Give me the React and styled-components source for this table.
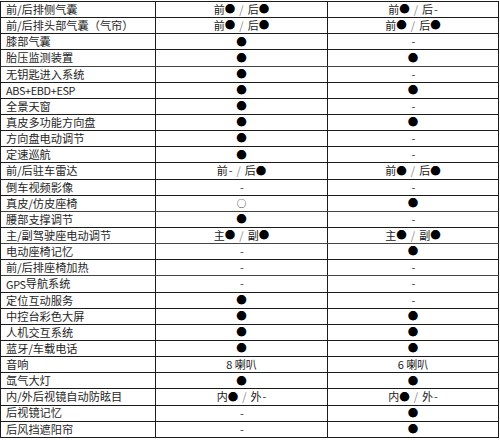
import React from "react";
import styled, { createGlobalStyle } from "styled-components";

const Global = createGlobalStyle`
  html, body { margin: 0; padding: 0; background: #ffffff; }
  body { font-family: "Noto Sans CJK SC", "Noto Sans", sans-serif; }
`;

const Page = styled.div`
  width: 500px;
  height: 440px;
  overflow: hidden;
  padding-top: 1px;
  box-sizing: border-box;
  background: #fff;
`;

const Table = styled.div`
  width: 499px;
  border-top: 1px solid #1c1c1c;
  border-left: 1px solid #1c1c1c;
  box-sizing: border-box;
`;

const Row = styled.div`
  display: grid;
  grid-template-columns: 155px 172px 171px;
  height: 16.15px;
  box-sizing: border-box;
  border-bottom: 1px solid ${(p) => (p.$soft ? "#444" : "#1c1c1c")};
`;

const Label = styled.div`
  display: flex;
  align-items: center;
  padding-left: 5px;
  border-right: 1px solid #1c1c1c;
  font-size: 11.2px;
  line-height: 1;
  color: #1e1e1e;
  white-space: nowrap;
  overflow: hidden;
`;

const Latin = styled.span`
  letter-spacing: -0.3px;
  font-size: 10.8px;
`;

const Cell = styled.div`
  display: flex;
  align-items: center;
  justify-content: center;
  border-right: 1px solid #1c1c1c;
  font-size: 11px;
  line-height: 1;
  color: #1a1a1a;
  white-space: pre;
`;

const Dot = styled.span`
  color: #000;
  font-size: 10.5px;
`;

const Ring = styled.span`
  color: #111;
  font-size: 9.5px;
`;

const Slash = styled.span`
  color: #8a8a8a;
  margin: 0 4px;
`;

const Dash = styled.span`
  color: #333;
  margin-left: 1px;
`;

const mark = (v) => (v === "●" ? <Dot>●</Dot> : <Dash>-</Dash>);

const renderValue = (v) => {
  if (v === "●") return <Dot>●</Dot>;
  if (v === "-") return <Dash>-</Dash>;
  if (v === "○") return <Ring>○</Ring>;
  if (Array.isArray(v)) {
    const [a, av, b, bv] = v;
    return (
      <>
        {a}
        {mark(av)}
        <Slash>/</Slash>
        {b}
        {mark(bv)}
      </>
    );
  }
  return v;
};

const rows = [
  ["前/后排侧气囊", ["前", "●", "后", "●"], ["前", "●", "后", "-"]],
  ["前/后排头部气囊（气帘）", ["前", "●", "后", "●"], ["前", "●", "后", "●"]],
  ["膝部气囊", "●", "-"],
  ["胎压监测装置", "●", "●"],
  ["无钥匙进入系统", "●", "-"],
  [<Latin key="a">ABS+EBD+ESP</Latin>, "●", "●"],
  ["全景天窗", "●", "-"],
  ["真皮多功能方向盘", "●", "●"],
  ["方向盘电动调节", "●", "-"],
  ["定速巡航", "●", "-"],
  ["前/后驻车雷达", ["前", "-", "后", "●"], ["前", "●", "后", "●"]],
  ["倒车视频影像", "-", "-"],
  ["真皮/仿皮座椅", "○", "●"],
  ["腰部支撑调节", "●", "-"],
  ["主/副驾驶座电动调节", ["主", "●", "副", "●"], ["主", "●", "副", "●"]],
  ["电动座椅记忆", "-", "●"],
  ["前/后排座椅加热", "-", "-"],
  [<><Latin key="g">GPS</Latin> 导航系统</>, "-", "-"],
  ["定位互动服务", "●", "-"],
  ["中控台彩色大屏", "●", "●"],
  ["人机交互系统", "●", "●"],
  ["蓝牙/车载电话", "●", "●"],
  ["音响", "8 喇叭", "6 喇叭"],
  ["氙气大灯", "●", "●"],
  ["内/外后视镜自动防眩目", ["内", "●", "外", "-"], ["内", "●", "外", "-"]],
  ["后视镜记忆", "-", "●"],
  ["后风挡遮阳帘", "-", "●"],
];

const softRows = new Set([3, 12, 14, 16]);

export default function App() {
  return (
    <Page>
      <Global />
      <Table>
        {rows.map(([label, mid, right], i) => (
          <Row key={i} $soft={softRows.has(i)}>
            <Label>{label}</Label>
            <Cell>{renderValue(mid)}</Cell>
            <Cell>{renderValue(right)}</Cell>
          </Row>
        ))}
      </Table>
    </Page>
  );
}
